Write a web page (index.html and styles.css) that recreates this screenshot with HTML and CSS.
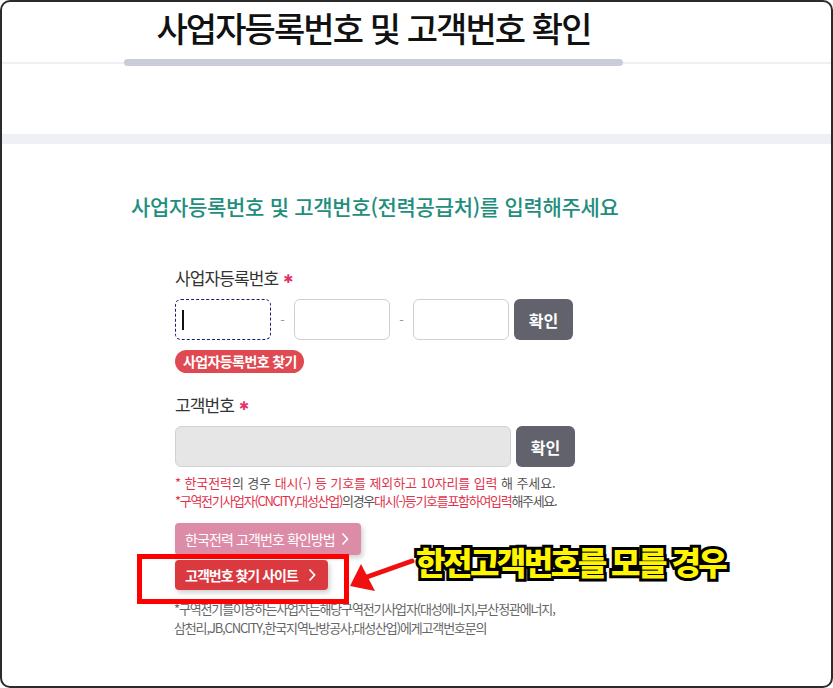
FILE: index.html
```html
<!DOCTYPE html>
<html lang="ko">
<head>
<meta charset="utf-8">
<title>사업자등록번호 및 고객번호 확인</title>
<link rel="stylesheet" href="styles.css">
</head>
<body>
<div class="frame">
  <header class="header">
    <div class="title-wrap">
      <h1 class="title">사업자등록번호 및 고객번호 확인</h1>
      <div class="title-bar"></div>
    </div>
  </header>
  <div class="rule"></div>
  <div class="band"></div>

  <main class="content">
    <h2 class="section-title">사업자등록번호 및 고객번호(전력공급처)를 입력해주세요</h2>

    <div class="form">
      <div class="label">사업자등록번호<span class="req">✱</span></div>
      <div class="row">
        <div class="input focus"><span class="caret"></span></div>
        <span class="dash">-</span>
        <div class="input"></div>
        <span class="dash">-</span>
        <div class="input"></div>
        <button class="btn-confirm">확인</button>
      </div>
      <div class="pill">사업자등록번호 찾기</div>

      <div class="label label-2">고객번호<span class="req">✱</span></div>
      <div class="row">
        <div class="input wide disabled"></div>
        <button class="btn-confirm">확인</button>
      </div>

      <p class="note n1"><span class="red">* 한국전력</span>의 경우 <span class="red">대시(-) 등 기호를 제외하고 10자리를 입력</span> 해 주세요.</p>
      <p class="note n2"><span class="red">*구역전기사업자(CNCITY,대성산업)</span>의경우<span class="red">대시(-)등기호를포함하여입력</span>해주세요.</p>

      <div class="link-btn pink">한국전력 고객번호 확인방법
        <svg class="chev" viewBox="0 0 8 14" width="8" height="14"><polyline points="1.5,1.5 6.5,7 1.5,12.5" fill="none" stroke="#fff" stroke-width="1.6"/></svg>
      </div>
      <div class="link-btn red-btn">고객번호 찾기 사이트
        <svg class="chev" viewBox="0 0 8 14" width="8" height="14"><polyline points="1.5,1.5 6.5,7 1.5,12.5" fill="none" stroke="#fff" stroke-width="1.8"/></svg>
      </div>

      <p class="foot">*구역전기를이용하는사업자는해당구역전기사업자(대성에너지,부산정관에너지,<br>삼천리,JB,CNCITY,한국지역난방공사,대성산업)에게고객번호문의</p>
    </div>
  </main>

  <div class="annot-box"></div>
  <svg class="annot-arrow" viewBox="0 0 80 50" width="80" height="50">
    <line x1="70" y1="6" x2="22" y2="23" stroke="#f01010" stroke-width="5" stroke-linecap="round"/>
    <polygon points="8,31 19,9 33,36" fill="#f01010"/>
  </svg>
  <div class="annot-text">한전고객번호를 모를 경우</div>
</div>
</body>
</html>
```

FILE: styles.css
```css
* { box-sizing: border-box; }
html, body { margin: 0; padding: 0; background: #fff; }
body {
  font-family: "Noto Sans CJK KR", "Noto Sans", sans-serif;
  color: #333;
}
.frame {
  position: relative;
  width: 833px;
  height: 688px;
  border: 2px solid #2b2b2b;
  border-radius: 10px;
  overflow: hidden;
  background: #fff;
}
.header {
  padding: 6px 0 0 122px;
}
.title-wrap {
  width: 499px;
}
.title {
  margin: 0;
  height: 40px;
  line-height: 40px;
  font-size: 34px;
  font-weight: 500;
  color: #111;
  text-align: center;
  letter-spacing: -1.9px;
}
.title-bar {
  position: relative;
  z-index: 1;
  margin-top: 11px;
  height: 7px;
  border-radius: 4px;
  background: #c9cdd8;
  margin-bottom: -4px;
}
.rule {
  height: 2px;
  background: #eff0f3;
}
.band {
  margin-top: 70px;
  height: 10px;
  background: #eff0f5;
}
.content {
  padding: 48px 0 0 129px;
}
.section-title {
  margin: 0;
  font-size: 21px;
  line-height: 28px;
  font-weight: 500;
  color: #1f8e7d;
  letter-spacing: -0.3px;
}
.form {
  padding: 46px 0 0 44px;
}
.label {
  font-size: 17px;
  line-height: 24px;
  letter-spacing: -0.9px;
  color: #333;
}
.req {
  color: #e0336a;
  font-size: 12px;
  margin-left: 5px;
  vertical-align: 2px;
  font-family: "DejaVu Sans", sans-serif;
}
.label-2 { margin-top: 20px; }
.row {
  display: flex;
  align-items: center;
  margin-top: 8px;
}
.input {
  width: 96px;
  height: 41px;
  border: 1px solid #cfcfcf;
  border-radius: 6px;
  background: #fff;
  display: flex;
  align-items: center;
}
.input.focus {
  border: 1px dashed #1c1c6e;
}
.caret {
  display: block;
  width: 1.5px;
  height: 20px;
  background: #111;
  margin-left: 6px;
}
.input.wide {
  width: 336px;
}
.input.disabled {
  background: #e6e6e6;
  border-color: #d2d2d2;
}
.dash {
  width: 23px;
  text-align: center;
  color: #999;
  font-size: 13px;
}
.btn-confirm {
  margin-left: 5px;
  width: 59px;
  height: 41px;
  border: none;
  border-radius: 6px;
  background: #62626d;
  color: #fff;
  font-family: inherit;
  font-size: 16px;
  font-weight: 700;
  padding: 0;
}
.pill {
  display: inline-block;
  margin-top: 10px;
  height: 23px;
  line-height: 23px;
  padding: 0 7px 0 8px;
  border-radius: 12px;
  background: #df4a52;
  color: #fff;
  font-size: 14px;
  font-weight: 700;
  letter-spacing: -0.6px;
}
.note {
  margin: 0;
  font-size: 13px;
  line-height: 18px;
  color: #555;
}
.n1 { margin-top: 7px; letter-spacing: -0.1px; }
.n2 { letter-spacing: -1.3px; }
.red { color: #e2324a; }
.link-btn {
  display: flex;
  align-items: center;
  justify-content: space-between;
  color: #fff;
  font-size: 14px;
  letter-spacing: -0.9px;
  border-radius: 4px;
  padding: 0 12px 0 10px;
  box-shadow: 2px 3px 5px rgba(0,0,0,0.18);
}
.link-btn.pink {
  margin-top: 13px;
  width: 186px;
  height: 32px;
  background: #dd8ca8;
}
.link-btn.red-btn {
  margin-top: 5px;
  width: 153px;
  height: 30px;
  background: #d9393f;
  font-weight: 700;
  letter-spacing: -1px;
}
.chev { display: block; }
.foot {
  margin: 9px 0 0 -1px;
  font-size: 13px;
  line-height: 19px;
  color: #666;
  letter-spacing: -1.15px;
}
.annot-box {
  position: absolute;
  left: 135px;
  top: 552px;
  width: 212px;
  height: 50px;
  border: 5px solid #ff0000;
}
.annot-arrow {
  position: absolute;
  left: 340px;
  top: 553px;
}
.annot-text {
  position: absolute;
  left: 414px;
  top: 536px;
  font-size: 32px;
  line-height: 46px;
  font-weight: 900;
  letter-spacing: -2.5px;
  color: #fff500;
  -webkit-text-stroke: 6px #000;
  paint-order: stroke fill;
  white-space: nowrap;
}
```
